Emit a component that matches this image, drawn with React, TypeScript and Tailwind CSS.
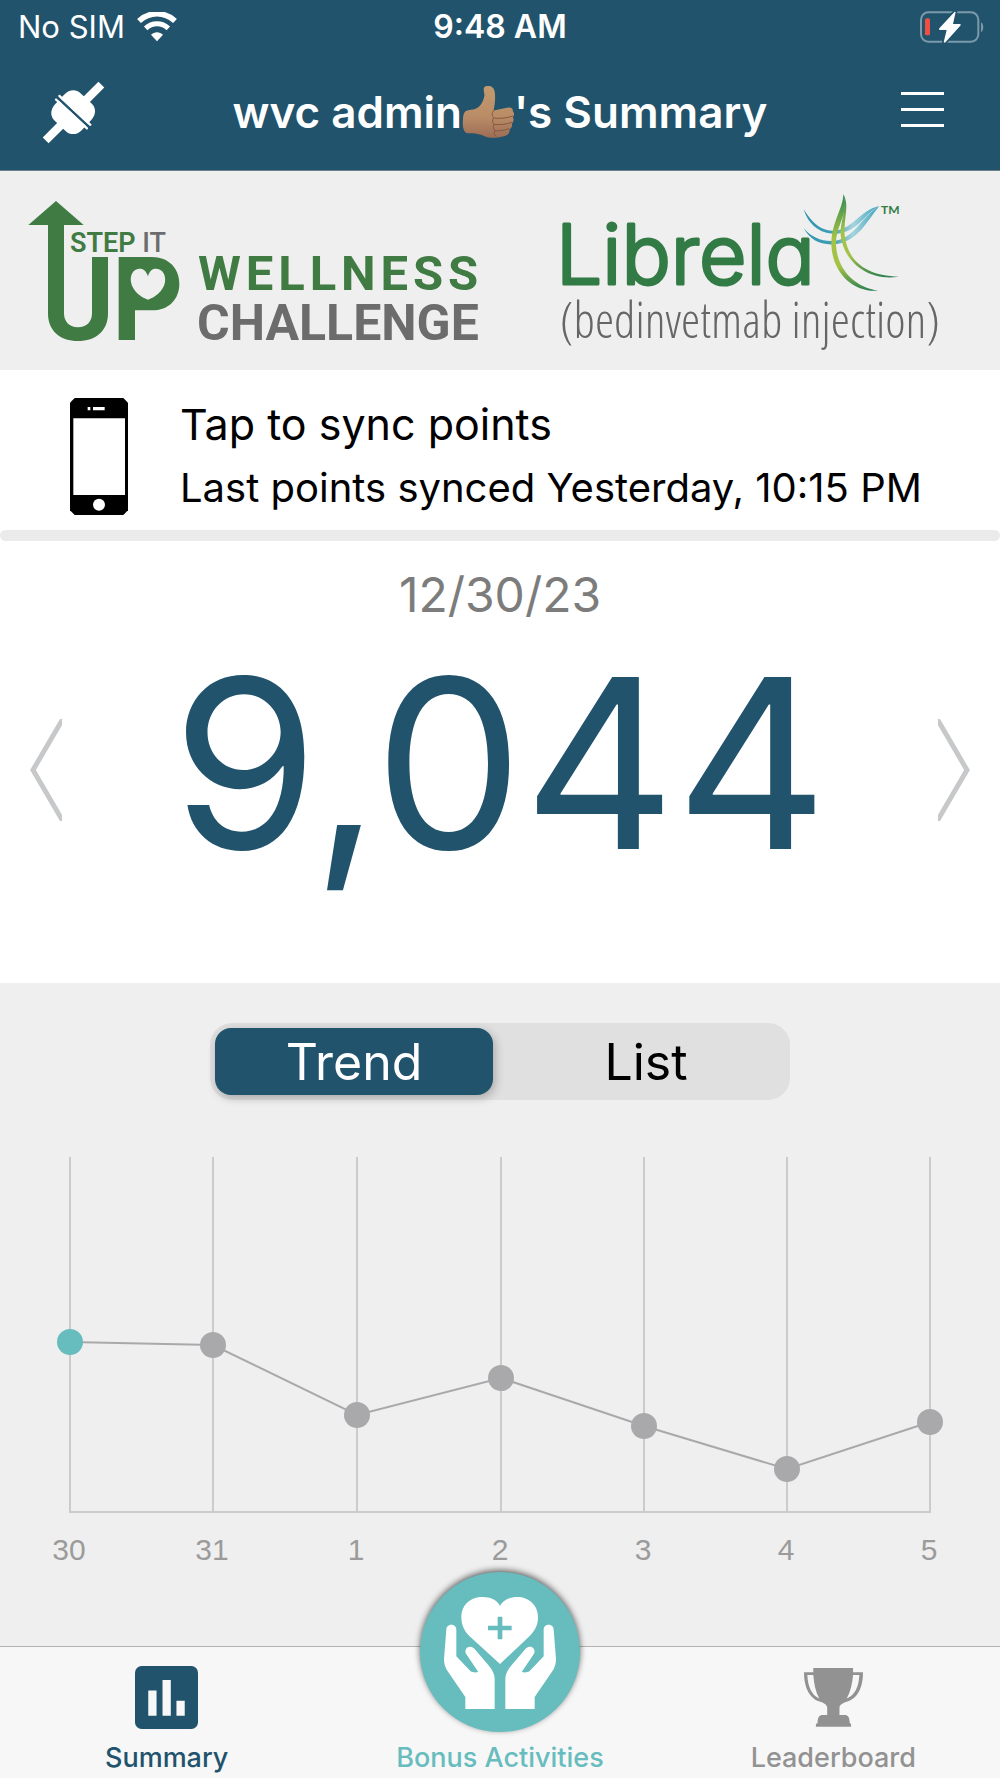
import React, { useState } from 'react';

const days = [
  { label: '30', x: 70, y: 202 },
  { label: '31', x: 213, y: 205 },
  { label: '1', x: 357, y: 275 },
  { label: '2', x: 501, y: 238 },
  { label: '3', x: 644, y: 286 },
  { label: '4', x: 787, y: 329 },
  { label: '5', x: 930, y: 282 },
];

const WifiIcon = () => (
  <svg viewBox="0 0 120 90" className="w-10 h-[30px]" fill="none" stroke="#fff" aria-hidden="true">
    <path d="M6 27C38-2 82-2 114 27" strokeWidth="17" />
    <path d="M26 49c19-18 49-18 68 0" strokeWidth="15" />
    <path d="M42 68c10-10 26-10 36 0L60 88z" fill="#fff" stroke="none" />
  </svg>
);

const BatteryIcon = () => (
  <svg viewBox="0 0 192 96" className="w-16 h-8" aria-label="Battery charging" role="img">
    <rect x="3" y="4" width="172" height="88" rx="22" fill="none" stroke="#7c9aaa" strokeWidth="6" />
    <path d="M183 34c9 4 9 26 0 30z" fill="#7c9aaa" />
    <rect x="15" y="22" width="15" height="51" rx="5" fill="#f04e42" />
    <path
      d="M104 2 58 52c-2 3-1 5 2 5h20L71 94l4 1 46-51c2-3 1-5-2-5h-20l8-36z"
      fill="#fff"
      stroke="#21536c"
      strokeWidth="10"
      paintOrder="stroke"
    />
  </svg>
);

const PlugIcon = () => (
  <svg viewBox="0 0 190 190" className="w-[63px] h-[63px]" aria-hidden="true">
    <path d="M11 179 65 125M125 65 179 11" stroke="#fff" strokeWidth="25" />
    <g transform="rotate(43 94 94)" fill="#fff">
      <path d="M38 90V74c0-24 16-37 32-37h48c16 0 32 13 32 37v16z" />
      <path d="M38 98v16c0 24 16 37 32 37h48c16 0 32-13 32-37V98z" />
      <rect x="27" y="83" width="134" height="7" rx="3" />
      <rect x="27" y="98" width="134" height="7" rx="3" />
    </g>
  </svg>
);

const ThumbIcon = () => (
  <svg viewBox="0 0 156 160" className="w-[52px] h-[53px]" role="img" aria-label="thumbs up">
    <defs>
      <linearGradient id="skin" x1="0" y1="0" x2="0" y2="1">
        <stop offset="0" stopColor="#c39a70" />
        <stop offset="0.6" stopColor="#b98c66" />
        <stop offset="1" stopColor="#9d6d55" />
      </linearGradient>
    </defs>
    <path
      d="M2 115c0-20 1-32 8-39 10-5 22-3 32-8 16-8 22-24 25-38 1-9-4-18-1-25 5-8 23-7 29 3 6 12 5 30 3 48l-3 18 44-9c10-2 15 4 14 11 5 5 5 12 0 18 4 7 2 14-3 19 2 8-1 14-7 18 1 10-4 17-15 20-22 7-44 8-64-1-18-8-39-6-49-7-8-2-13-14-13-28z"
      fill="url(#skin)"
    />
    <path
      d="M95 74c-6 7-5 17 0 22-5 6-4 16 1 20-4 7-2 15 3 18-4 6-3 13 3 18M97 97c18 2 37 0 55-6M97 116c17 2 36 0 52-6M99 135c14 1 30-1 42-6"
      fill="none"
      stroke="#86583f"
      strokeWidth="3"
      strokeLinecap="round"
    />
  </svg>
);

const StepItUpLogo = () => (
  <svg viewBox="0 171 500 199" className="w-full" role="img" aria-label="Step It Up Wellness Challenge">
    <g transform="translate(0 180) scale(0.33333)">
      <path d="M85 135 168 63l83 72h-59v265c0 25 16 42 42 42s42-17 42-42V231h48v170c0 51-37 82-90 82s-90-31-90-82V135z" fill="#407b43" />
      <path
        d="M356 231h100c50 0 82 34 82 80 0 47-32 80-82 80h-51v89h-49zM444 289c-7-20-19-24-30-22-16 2-24 20-21 39 4 26 29 46 51 53 22-7 47-27 51-53 3-19-6-37-22-39-12-2-23 2-29 22z"
        fill="#407b43"
        fillRule="evenodd"
      />
    </g>
    <g className="font-[Roboto,sans-serif]">
      <text x="70" y="252" className="text-[27px] font-semibold" fill="#407b43">STEP <tspan className="font-medium" fill="#6c6c6c">IT</tspan></text>
      <text x="198" y="290" className="text-[49px] font-bold tracking-widest" fill="#407b43">WELLNESS</text>
      <text x="197" y="340" className="text-[50px] font-bold" fill="#6c6c6c">CHALLENGE</text>
    </g>
  </svg>
);

const LibrelaLogo = () => (
  <svg viewBox="500 171 500 199" className="w-full" role="img" aria-label="Librela (bedinvetmab injection)">
    <defs>
      <linearGradient id="leaf" x1="0" y1="0" x2="0" y2="1">
        <stop offset="0" stopColor="#2f8a52" />
        <stop offset="0.45" stopColor="#a3c246" />
        <stop offset="0.75" stopColor="#a3c246" />
        <stop offset="1" stopColor="#2b8050" />
      </linearGradient>
      <linearGradient id="sky" x1="0" y1="0" x2="1" y2="0">
        <stop offset="0" stopColor="#2f95b0" />
        <stop offset="0.4" stopColor="#3f9fb4" />
        <stop offset="0.65" stopColor="#a5d5de" />
        <stop offset="1" stopColor="#3fa3bd" />
      </linearGradient>
    </defs>
    <text
      x="556"
      y="284"
      className="font-[Inter,sans-serif] text-[82px] font-light [font-feature-settings:'cv11']"
      fill="#327b45"
      stroke="#327b45"
      strokeWidth="3"
      strokeLinejoin="round"
    >
      Librela
    </text>
    <text x="881" y="214" className="font-[Lato,sans-serif] text-[12px] font-bold" fill="#327b45">TM</text>
    <g transform="translate(500 180) scale(0.33333)">
      <path d="M911 88c30 50 60 67 97 64 50-7 74-62 130-74-40 20-62 75-126 83-46 4-86-23-101-73z" fill="url(#sky)" />
      <path d="M911 145c24 28 55 40 88 38 64-5 82-70 139-105-37 45-64 108-136 115-42 3-73-15-91-48z" fill="url(#sky)" />
      <path d="M1030 42C1030 85 994 125 994 195c4 85 66 143 141 137-70-10-123-62-127-137-2-60 42-95 22-153z" fill="url(#leaf)" />
      <path d="M1030 42c20 38 0 70 4 123 8 75 61 123 163 125-92 15-167-45-175-125-2-45 20-75 8-123z" fill="url(#leaf)" />
    </g>
    <text
      x="560"
      y="338"
      className="font-['Open_Sans_Condensed_Light','Open_Sans_Light_Condensed','Liberation_Sans_Narrow',sans-serif] text-[49px] font-light"
      fill="#666"
    >
      (bedinvetmab injection)
    </text>
  </svg>
);

const PhoneIcon = () => (
  <svg viewBox="0 0 174 351" className="w-[58px] h-[117px] shrink-0" aria-hidden="true">
    <path d="M14 0h146l14 14v323l-14 14H14L0 337V14z" fill="#000" />
    <path d="M10 61h155v230H10zM53 27h8v10h-8zM69 27h35v10H69z" fill="#fff" />
    <circle cx="87" cy="320" r="18" fill="#fff" />
  </svg>
);

const ChartIcon = () => (
  <svg viewBox="0 0 190 190" className="w-[63px] h-[63px]" aria-hidden="true">
    <rect width="190" height="190" rx="20" fill="#21536c" />
    <path d="M40 74h25v76H40zM83 42h25v108H83zM125 105h25v45h-25z" fill="#f7f7f7" />
  </svg>
);

const HandsIcon = () => (
  <svg viewBox="0 0 480 480" className="w-full h-full" aria-hidden="true">
    <g fill="#fff">
      <path d="M240 276 148 192c-18-18-24-37-24-57 0-38 30-60 63-60 26 0 44 9 53 26 10-17 28-26 52-26 34 0 62 24 62 60 0 22-7 39-25 57z" />
      <path d="M79 173c0-20 30-20 30 0v80l42 44c7 5 16 5 24 3l-36-53c-10-17 10-31 23-18l46 54c11 14 16 25 16 38v90h-88v-36L80 293c-5-9-8-20-8-32z" />
      <path d="M401 173c0-20-30-20-30 0v80l-42 44c-7 5-16 5-24 3l36-53c10-17-10-31-23-18l-46 54c-11 14-16 25-16 38v90h88v-36l56-82c5-9 8-20 8-32z" />
    </g>
    <path d="M233 134h14v27h28v14h-28v27h-14v-27h-29v-14h29z" fill="#67bcbe" />
  </svg>
);

const TrophyIcon = () => (
  <svg viewBox="0 0 178 178" className="w-[59px] h-[59px]" aria-hidden="true">
    <path
      d="M28 0h120v13h30c0 48-17 83-56 91-7 4-15 7-15 16v22h15c12 0 15 7 16 24l4 3v8H36v-8l5-3c0-17 5-24 16-24h13v-22c0-9-8-12-14-16C18 97 0 61 0 13h28zM10 21c2 37 14 61 36 71C35 72 30 46 28 21zM148 21c-2 25-8 51-19 71 24-10 36-34 38-71z"
      fill="#929292"
      fillRule="evenodd"
    />
  </svg>
);

const TrendChart = () => (
  <svg viewBox="0 0 1000 430" className="w-full" role="img" aria-label="Points trend">
    {days.map((day) => (
      <path key={day.label} d={`M${day.x} 17V372`} stroke="#cbcbcb" strokeWidth="2" />
    ))}
    <path d="M69 372H931" stroke="#cbcbcb" strokeWidth="2" />
    <polyline points={days.map((day) => `${day.x},${day.y}`).join(' ')} fill="none" stroke="#a9a9a9" strokeWidth="2" />
    {days.map((day, index) => (
      <circle key={day.label} cx={day.x} cy={day.y} r="13" fill={index === 0 ? '#67bcbe' : '#a9a9ab'} />
    ))}
    {days.map((day) => (
      <text
        key={day.label}
        x={day.x - 1}
        y="420"
        textAnchor="middle"
        fill="#9b9b9b"
        className="font-['Liberation_Sans',sans-serif] text-[30px]"
      >
        {day.label}
      </text>
    ))}
  </svg>
);

const App = () => {
  const [view, setView] = useState('Trend');

  return (
    <div className="min-h-screen flex flex-col bg-[#efefef] font-[Inter,sans-serif]">
      <header className="bg-[#21536c] text-white border-b border-[#6d7f88]">
        <div className="h-[54px] px-4 grid grid-cols-[1fr_auto_1fr] items-center">
          <div className="pl-[2px] flex items-center gap-3 text-[31px]">
            <span>No SIM</span>
            <WifiIcon />
          </div>
          <span className="text-[32px] font-semibold">9:48 AM</span>
          <div className="flex justify-end">
            <BatteryIcon />
          </div>
        </div>
        <div className="h-[116px] px-[42px] grid grid-cols-[1fr_auto_1fr] items-center">
          <button type="button" aria-label="Connect device">
            <PlugIcon />
          </button>
          <h1 className="flex items-center text-[44px] leading-[54px] font-semibold">
            <span>wvc admin</span>
            <ThumbIcon />
            <span>'s Summary</span>
          </h1>
          <button type="button" aria-label="Menu" className="w-[57px] pr-[14px] pb-[6px] justify-self-end flex flex-col gap-[13px]">
            <span className="h-[3px] bg-white" />
            <span className="h-[3px] bg-white" />
            <span className="h-[3px] bg-white" />
          </button>
        </div>
      </header>

      <div className="grid grid-cols-2">
        <StepItUpLogo />
        <LibrelaLogo />
      </div>

      <main className="flex-1 flex flex-col">
        <button type="button" className="h-[160px] pt-3 pl-[70px] flex items-center gap-[52px] bg-white text-black text-left">
          <PhoneIcon />
          <span className="flex flex-col gap-3">
            <span className="text-[43px] leading-[52px]">Tap to sync points</span>
            <span className="text-[40px] leading-[52px]">Last points synced Yesterday, 10:15 PM</span>
          </span>
        </button>
        <div className="bg-white">
          <div className="h-[11px] rounded-full bg-[#ebebeb]" />
        </div>

        <section className="bg-white pt-6 pb-[105px]">
          <p className="text-center text-[48px] leading-[60px] text-[#7c7c7c]">12/30/23</p>
          <div className="mt-[23px] px-[30px] flex items-center justify-between">
            <button type="button" aria-label="Previous day" className="pt-[14px]">
              <svg viewBox="0 0 32 102" className="w-8 h-[102px]" fill="none" stroke="#c6c8ca" strokeWidth="5">
                <path d="M34-2 3 51l31 53" />
              </svg>
            </button>
            <p className="text-[236px] leading-[230px] text-[#21536c]">9,044</p>
            <button type="button" aria-label="Next day" className="pt-[14px]">
              <svg viewBox="0 0 32 102" className="w-8 h-[102px]" fill="none" stroke="#c6c8ca" strokeWidth="5">
                <path d="m-2-2 31 53-31 53" />
              </svg>
            </button>
          </div>
        </section>

        <section className="flex-1 pt-10">
          <div className="mx-auto w-[58%] h-[77px] p-[5px] flex gap-[14px] rounded-[22px] bg-[#e0e0e0] text-[50px] leading-none">
            {['Trend', 'List'].map((name) => (
              <button
                key={name}
                type="button"
                aria-pressed={view === name}
                onClick={() => setView(name)}
                className={
                  view === name
                    ? 'flex-1 rounded-[16px] bg-[#21536c] text-white shadow-[2px_3px_10px_rgba(0,0,0,0.25)]'
                    : 'flex-1 rounded-[16px] text-black'
                }
              >
                {name}
              </button>
            ))}
          </div>
          <div className="pt-10">
            <TrendChart />
          </div>
        </section>
      </main>

      <nav className="h-[132px] grid grid-cols-3 grid-rows-1 bg-[#f7f7f7] border-t border-[#b2b2b2] text-[27px] leading-[30px] font-medium">
        <a href="#summary" className="flex flex-col items-center justify-end gap-[14px] pb-[5px] text-[#21536c]">
          <ChartIcon />
          Summary
        </a>
        <a href="#bonus" className="flex flex-col items-center justify-end gap-[11px] pb-[5px] text-[#67bcbe]">
          <span className="w-[160px] h-[160px] shrink-0 rounded-full bg-[#67bcbe] shadow-[0_-2px_6px_rgba(0,0,0,0.6)]">
            <HandsIcon />
          </span>
          Bonus Activities
        </a>
        <a href="#leaderboard" className="flex flex-col items-center justify-end gap-4 pb-[5px] text-[#929292]">
          <TrophyIcon />
          Leaderboard
        </a>
      </nav>
    </div>
  );
};

export default App;
